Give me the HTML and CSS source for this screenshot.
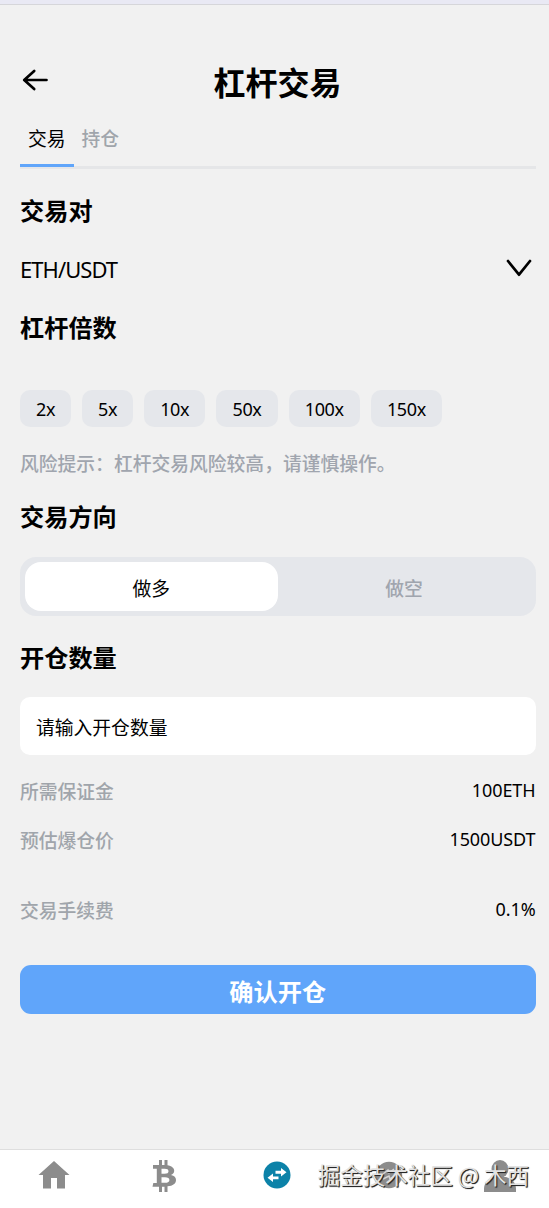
FILE: index.html
```html
<!DOCTYPE html>
<html lang="zh-CN">
<head>
<meta charset="utf-8">
<title>杠杆交易</title>
<link rel="stylesheet" href="styles.css">
</head>
<body>
<div class="app">
  <div class="topbar"></div>
  <header class="header">
    <svg class="back" viewBox="0 0 26 22" width="26" height="22"><path d="M12.2 2 2.2 11l10 9M2.5 11H24.5"/></svg>
    <h1 class="title">杠杆交易</h1>
  </header>
  <main class="content">
    <nav class="tabs">
      <span class="tab tab-active">交易</span>
      <span class="tab">持仓</span>
    </nav>
    <h2 class="heading heading-pair">交易对</h2>
    <div class="pair">
      <span class="pair-name">ETH/USDT</span>
      <svg class="chevron" viewBox="0 0 26 18" width="26" height="18"><path d="M2 2 13 15.7 24 2"/></svg>
    </div>
    <h2 class="heading heading-lever">杠杆倍数</h2>
    <div class="chips">
      <span class="chip chip-s">2x</span>
      <span class="chip chip-s">5x</span>
      <span class="chip chip-m">10x</span>
      <span class="chip chip-m">50x</span>
      <span class="chip chip-l">100x</span>
      <span class="chip chip-l">150x</span>
    </div>
    <p class="risk">风险提示：杠杆交易风险较高，请谨慎操作。</p>
    <h2 class="heading heading-side">交易方向</h2>
    <div class="segment">
      <span class="side side-active">做多</span>
      <span class="side">做空</span>
    </div>
    <h2 class="heading heading-amount">开仓数量</h2>
    <div class="field">请输入开仓数量</div>
    <dl class="details">
      <div class="row"><dt>所需保证金</dt><dd>100ETH</dd></div>
      <div class="row"><dt>预估爆仓价</dt><dd>1500USDT</dd></div>
      <div class="row row-fee"><dt>交易手续费</dt><dd>0.1%</dd></div>
    </dl>
    <button class="submit">确认开仓</button>
  </main>
  <footer class="nav">
    <span class="nav-item"><svg viewBox="0 0 32 32" width="32" height="32"><path d="M16 1 .5 15H5v13.500h8V18h6v10.500h8V15h4.500Z"/></svg></span>
    <span class="nav-item"><svg viewBox="0 0 32 32" width="32" height="32"><path fill-rule="evenodd" d="M4 5h6V0h3v5h2.500V0h3v5.200c4 .6 6.700 2.600 6.700 5.500 0 2-1.200 3.500-3.200 4.200 3.400.7 5 2.400 5 5 0 3.600-3 5.900-8.500 6.300V32h-3v-5.200H13V32h-3v-5.200H3.500l.8-3.800h3.500V8.800H4ZM12.500 8.800v5h3c2.800 0 4-.8 4-2.500s-1.200-2.500-4-2.500Zm0 8.500v5.500h3.500c3 0 4.400-.9 4.400-2.800s-1.400-2.700-4.400-2.700Z"/></svg></span>
    <span class="nav-item"><svg viewBox="0 0 32 32" width="32" height="32"><circle class="swap-disc" cx="16" cy="15" r="13.500"/><path class="swap-arrows" d="M14.500 10.800h5.500V8l5.500 4.300-5.500 4.200v-2.800h-5.500ZM17.500 16.400H12v-2.800L6.500 17.800 12 22v-2.800h5.500Z"/></svg></span>
    <span class="nav-item"><svg viewBox="0 0 32 32" width="32" height="32"><circle cx="16" cy="15" r="13.200"/><path class="coin-mark" d="m10 14 5-4 1 3 5-4M10 19l6-3 1 3 5-3"/></svg></span>
    <span class="nav-item"><svg viewBox="0 0 32 32" width="32" height="32"><ellipse cx="16" cy="9" rx="8.500" ry="9"/><path d="M0 32v-3c0-7 5-10.500 10-12h12c5 1.500 10 5 10 12v3Z"/></svg></span>
    <span class="watermark">掘金技术社区 @ 木西</span>
  </footer>
</div>
</body>
</html>
```
FILE: styles.css
```css
* { box-sizing: border-box; }
body {
  margin: 0;
  background: #f1f1f1;
  color: #000;
  font-family: "Noto Sans", "Noto Sans CJK SC", sans-serif;
  font-size: 18.8px;
}
h1, h2, p, dl, dd { margin: 0; }
.app { display: flex; flex-direction: column; height: 1208px; overflow: hidden; }
.topbar { height: 5px; flex: none; background: #e9e9f4; border-bottom: 1px solid #d6d6da; }
.header {
  display: grid;
  grid-template-columns: 26px 1fr 26px;
  align-items: center;
  height: 48px;
  margin: 53px 16px 0 22px;
}
.back, .chevron { fill: none; stroke: #000; stroke-width: 2.7; stroke-linecap: round; stroke-linejoin: round; }
.back { margin-top: -4px; }
.title { margin-top: -3px; font-size: 32px; line-height: 48px; text-align: center; font-family: "Noto Sans CJK SC", sans-serif; }
.content { display: flex; flex-direction: column; padding: 0 13.5px 0 20px; }
.tabs { display: flex; height: 63px; border-bottom: 3px solid #e5e6e8; }
.tab { height: 61px; padding: 18px 8px 0; line-height: 28px; color: #a0a5ab; font-weight: 500; font-family: "Noto Sans CJK SC", sans-serif; }
.tab-active { color: #000; font-weight: 400; border-bottom: 3px solid #60a5fa; }
.heading { font-size: 24.2px; line-height: 36px; font-weight: 700; font-family: "Noto Sans CJK SC", sans-serif; }
.heading-pair { margin-top: 23px; }
.pair { display: flex; align-items: center; justify-content: space-between; height: 42px; margin-top: 20px; padding-right: 4px; }
.pair-name { font-size: 22px; letter-spacing: -.95px; }
.chevron { margin-top: -3px; }
.heading-lever { margin-top: 19px; }
.chips { display: flex; gap: 11px; margin-top: 45px; }
.chip { height: 37px; border-radius: 10px; background: #e5e7eb; text-align: center; line-height: 38px; font-size: 18px; letter-spacing: -.4px; }
.chip-s { width: 51px; }
.chip-m { width: 61.300px; }
.chip-l { width: 71.200px; }
.risk { height: 28px; margin-top: 22px; line-height: 28px; color: #a0a5ae; font-weight: 500; font-family: "Noto Sans CJK SC", sans-serif; }
.heading-side { margin-top: 21px; }
.segment { display: flex; height: 59px; margin-top: 23px; padding: 5px; border-radius: 16px; background: #e5e7eb; }
.side { flex: 1; border-radius: 16px; line-height: 51px; text-align: center; color: #a0a5ae; font-weight: 500; font-family: "Noto Sans CJK SC", sans-serif; }
.side-active { background: #fff; color: #000; font-weight: 400; }
.heading-amount { margin-top: 23px; }
.field { height: 58px; margin-top: 22px; padding-left: 16px; border-radius: 10px; background: #fff; line-height: 60px; font-family: "Noto Sans CJK SC", sans-serif; }
.details { margin-top: 22px; }
.row { display: flex; justify-content: space-between; height: 28px; margin-bottom: 21px; line-height: 28px; }
.row dt { color: #a0a5ab; font-weight: 500; font-family: "Noto Sans CJK SC", sans-serif; }
.row dd { margin-top: -1px; font-size: 18px; letter-spacing: -.1px; }
.row-fee { margin-top: 42px; margin-bottom: 0; }
.submit {
  height: 49px;
  margin-top: 41px;
  padding: 1px 0 0;
  border: 0;
  border-radius: 11px;
  background: #60a5fa;
  color: #fff;
  font: 700 24.2px/47px "Noto Sans CJK SC", sans-serif;
}
.nav {
  position: relative;
  display: grid;
  grid-template-columns: repeat(5, 111.700px);
  justify-content: center;
  height: 59px;
  padding: 10px 0 0 5px;
  margin-top: auto;
  flex: none;
  border-top: 1px solid #dedede;
  background: #fff;
}
.nav-item { display: flex; justify-content: center; }
.nav-item svg { fill: #8c8c8c; }
.nav-item .swap-disc { fill: #0c82a8; }
.nav-item .swap-arrows { fill: #fff; }
.nav-item .coin-mark { fill: none; stroke: #d6d6d6; stroke-width: 1.5; }
.watermark {
  position: absolute;
  top: 6px;
  right: 20px;
  color: #e2e2e2;
  font: 22.500px/36px "Noto Sans CJK SC", sans-serif;
  white-space: nowrap;
  text-shadow: 1px 1px 1px #222, 1px 1px 0 #555;
}
```
